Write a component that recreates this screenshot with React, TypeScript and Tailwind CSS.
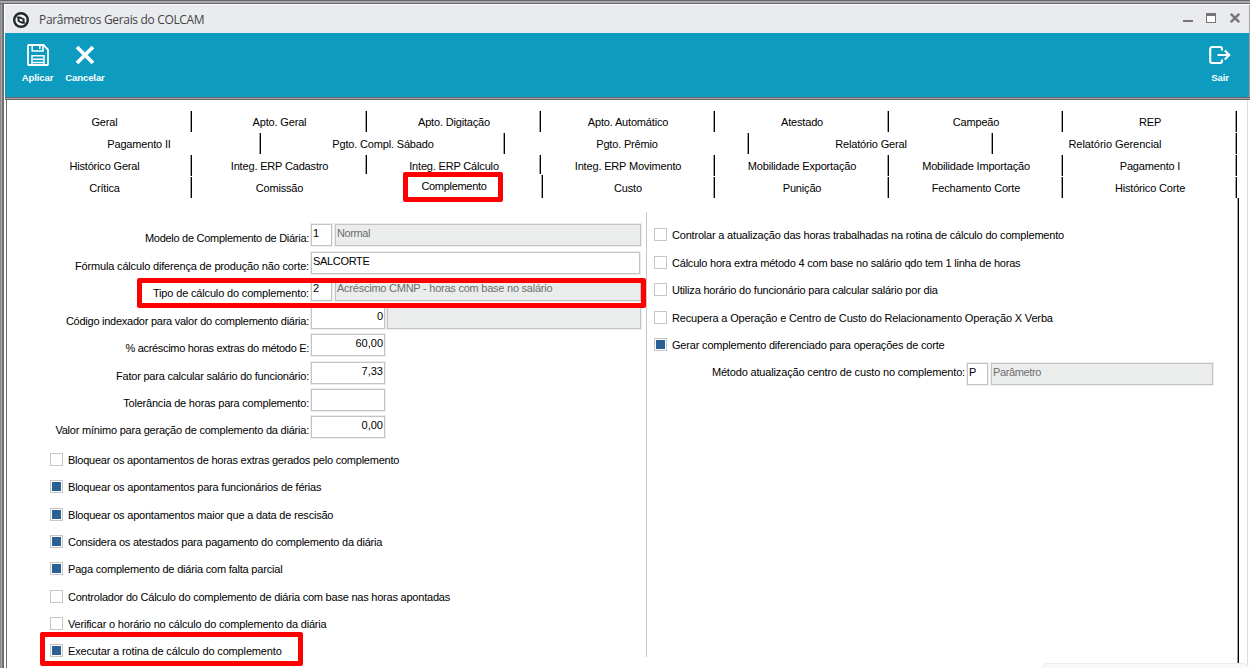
import React from 'react';
import { clsx } from 'clsx';

type Tab = { label: string; width: string; tracking?: string };

const tabRows: Tab[][] = [
  [
    { label: 'Geral', width: 'w-[175px]' },
    { label: 'Apto. Geral', width: 'w-[175px]' },
    { label: 'Apto. Digitação', width: 'w-[174px]' },
    { label: 'Apto. Automático', width: 'w-[174px]' },
    { label: 'Atestado', width: 'w-[174px]' },
    { label: 'Campeão', width: 'w-[174px]' },
    { label: 'REP', width: 'w-[174px]' },
  ],
  [
    { label: 'Pagamento II', width: 'w-[244px]' },
    { label: 'Pgto. Compl. Sábado', width: 'w-[244px]' },
    { label: 'Pgto. Prêmio', width: 'w-[244px]' },
    { label: 'Relatório Geral', width: 'w-[244px]' },
    { label: 'Relatório Gerencial', width: 'w-[244px]', tracking: 'tracking-[-0.06px]' },
  ],
  [
    { label: 'Histórico Geral', width: 'w-[175px]' },
    { label: 'Integ. ERP Cadastro', width: 'w-[175px]' },
    { label: 'Integ. ERP Cálculo', width: 'w-[174px]' },
    { label: 'Integ. ERP Movimento', width: 'w-[174px]' },
    { label: 'Mobilidade Exportação', width: 'w-[174px]' },
    { label: 'Mobilidade Importação', width: 'w-[174px]' },
    { label: 'Pagamento I', width: 'w-[174px]' },
  ],
  [
    { label: 'Crítica', width: 'w-[175px]' },
    { label: 'Comissão', width: 'w-[175px]' },
    { label: 'Complemento', width: 'w-[174px]', tracking: 'tracking-[-0.3px]' },
    { label: 'Custo', width: 'w-[174px]' },
    { label: 'Punição', width: 'w-[174px]' },
    { label: 'Fechamento Corte', width: 'w-[174px]' },
    { label: 'Histórico Corte', width: 'w-[174px]' },
  ],
];

const leftChecks = [
  { label: 'Bloquear os apontamentos de horas extras gerados pelo complemento', checked: false, height: 'h-[27px]', tracking: 'tracking-[-0.23px]' },
  { label: 'Bloquear os apontamentos para funcionários de férias', checked: true, height: 'h-[28px]', tracking: 'tracking-[-0.21px]' },
  { label: 'Bloquear os apontamentos maior que a data de rescisão', checked: true, height: 'h-[27px]', tracking: 'tracking-[-0.21px]' },
  { label: 'Considera os atestados para pagamento do complemento da diária', checked: true, height: 'h-[27px]', tracking: 'tracking-[-0.23px]' },
  { label: 'Paga complemento de diária com falta parcial', checked: true, height: 'h-[28px]', tracking: 'tracking-[-0.2px]' },
  { label: 'Controlador do Cálculo do complemento de diária com base nas horas apontadas', checked: false, height: 'h-[27px]', tracking: 'tracking-[-0.22px]' },
  { label: 'Verificar o horário no cálculo do complemento da diária', checked: false, height: 'h-[27px]', tracking: 'tracking-[-0.18px]' },
  { label: 'Executar a rotina de cálculo do complemento', checked: true, height: 'h-[13px]', tracking: 'tracking-[-0.15px]', marked: true },
];

const rightChecks = [
  { label: 'Controlar a atualização das horas trabalhadas na rotina de cálculo do complemento', checked: false, height: 'h-[28px]', tracking: 'tracking-[-0.196px]' },
  { label: 'Cálculo hora extra método 4 com base no salário qdo tem 1 linha de horas', checked: false, height: 'h-[27px]', tracking: 'tracking-[-0.215px]' },
  { label: 'Utiliza horário do funcionário para calcular salário por dia', checked: false, height: 'h-[28px]', tracking: 'tracking-[-0.2px]' },
  { label: 'Recupera a Operação e Centro de Custo do Relacionamento Operação X Verba', checked: false, height: 'h-[27px]', tracking: 'tracking-[-0.155px]' },
  { label: 'Gerar complemento diferenciado para operações de corte', checked: true, height: 'h-[25px]', tracking: 'tracking-[-0.185px]' },
];

const Marker: React.FC<{ className: string }> = ({ className }) => (
  <div className={clsx('absolute z-10 border-5 border-[#ff0000] rounded-[2px] pointer-events-none', className)} />
);

const Separator: React.FC<{ className?: string }> = ({ className }) => (
  <div className={clsx('w-[2px] shrink-0 bg-black border-l border-[#a0a0a0]', className)} />
);

const Box: React.FC<{ children?: React.ReactNode; className?: string; disabled?: boolean }> = ({ children, className, disabled }) => (
  <div
    className={clsx(
      'h-[22px] shrink-0 border border-[#c4c4c4] shadow-[0_0_0_1px_#ebecef] px-px pt-px leading-[14px] whitespace-nowrap',
      disabled ? 'bg-[#ebedec] text-[#6d6d6d]' : 'bg-white text-black',
      className
    )}
  >
    {children}
  </div>
);

const Field: React.FC<{ label: string; height: string; tracking: string; marked?: boolean; children: React.ReactNode }> = ({
  label, height, tracking, marked, children,
}) => (
  <div className={clsx('relative flex items-start', height)}>
    <span className={clsx('w-[302px] mr-[2px] pt-[7px] text-right leading-[14px] whitespace-nowrap', tracking)}>{label}</span>
    {children}
    {marked && <Marker className="left-[130px] -top-px w-[509px] h-[30px]" />}
  </div>
);

const Check: React.FC<{ label: string; checked: boolean; height: string; tracking: string; marked?: boolean }> = ({
  label, checked, height, tracking, marked,
}) => (
  <div className={clsx('relative flex items-start gap-[5px]', height)}>
    <span className="w-[13px] h-[13px] shrink-0 border border-[#c6c6c6] bg-white p-px">
      {checked && <span className="block w-[9px] h-[9px] bg-[#2b6096]" />}
    </span>
    <span className={clsx('leading-[14px] whitespace-nowrap', tracking)}>{label}</span>
    {marked && <Marker className="-left-[10px] -top-[12px] w-[263px] h-[34px]" />}
  </div>
);

const TitleBar: React.FC = () => (
  <div className="h-[28px] bg-[#e9ebee] flex items-center pl-[8px] pr-[9px]">
    <svg width="17" height="17" viewBox="0 0 17 17" className="mt-[2px]">
      <circle cx="8" cy="8" r="6.8" fill="#f4f5f6" stroke="#20282c" strokeWidth="2.4" />
      <path d="M3 4.6 L7 4.4 L11.6 6.8 V10 L13 11.6 L9 11.8 L4.6 9.4 V6.4 Z" fill="#20282c" />
      <path d="M6.6 6.6 L9.6 7.6 V9.8 L6.6 8.8 Z" fill="#f4f5f6" />
    </svg>
    <span className="ml-[9px] mt-[2px] font-['Open_Sans',sans-serif] text-[12px] tracking-[-0.33px] text-[#444444] whitespace-nowrap">
      Parâmetros Gerais do COLCAM
    </span>
    <div className="ml-auto flex -mt-[2px] text-[#757575]">
      <svg width="10" height="10" viewBox="0 0 10 10"><path d="M0 7h10v2H0z" fill="currentColor" /></svg>
      <svg width="10" height="10" viewBox="0 0 10 10" className="ml-[13px]">
        <path d="M0 0h10v10H0z" fill="currentColor" />
        <path d="M1 3h8v6H1z" fill="#fff" />
      </svg>
      <svg width="10" height="10" viewBox="0 0 10 10" className="ml-[14px]">
        <path d="M.8 .8 9.2 9.2M9.2 .8 .8 9.2" stroke="currentColor" strokeWidth="2.4" />
      </svg>
    </div>
  </div>
);

const ToolButton: React.FC<{ label: string; className: string; children: React.ReactNode }> = ({ label, className, children }) => (
  <div className={clsx('flex flex-col items-center text-white', className)}>
    <div className="h-[24px] flex items-center">{children}</div>
    <span className="mt-[5px] text-[9.5px] leading-[12px] font-bold tracking-[-0.1px]">{label}</span>
  </div>
);

const Toolbar: React.FC = () => (
  <div className="h-[64px] bg-[#0d9bc0] flex items-start pt-[10px] pl-[13px] pr-[9px]">
    <ToolButton label="Aplicar" className="w-[39px]">
      <svg width="22" height="22" viewBox="0 0 22 22" fill="none" stroke="#fff">
        <path d="M1 1.8 Q1 1 1.8 1 H16.5 L21 5.5 V20.2 Q21 21 20.2 21 H1.8 Q1 21 1 20.2 Z" strokeWidth="1.8" />
        <path d="M5.2 1 V7 H16 V1 M12.8 2 V5" strokeWidth="1.6" />
        <path d="M5 21 V11.8 H17 V21 M6 15.2 H16 M6 18.4 H16" strokeWidth="1.5" />
      </svg>
    </ToolButton>
    <ToolButton label="Cancelar" className="ml-[6px] w-[44px]">
      <svg width="20" height="20" viewBox="0 0 20 20">
        <path d="M2 2 18 18M18 2 2 18" stroke="#fff" strokeWidth="3.8" />
      </svg>
    </ToolButton>
    <ToolButton label="Sair" className="ml-auto w-[40px]">
      <svg width="23" height="20" viewBox="0 0 23 20" fill="none" stroke="#fff" strokeWidth="2.1" className="-ml-[2px]">
        <path d="M14 5.5 V4 Q14 2 12 2 H4.2 Q2.2 2 2.2 4 V16 Q2.2 18 4.2 18 H12 Q14 18 14 16 V14.5" />
        <path d="M9.5 10 H21 M16.8 5.6 21.2 10 16.8 14.4" />
      </svg>
    </ToolButton>
  </div>
);

// The selected tab sits 2px higher than its neighbours and hides the separator before it.
const Tabs: React.FC = () => (
  <div className="pl-[10px] pt-[11px] h-[98px]">
    {tabRows.map((row, i) => (
      <div key={i} className="h-[22px] flex">
        {row.map(({ label, width, tracking }) => {
          const active = label === 'Complemento';
          const short = label === 'Integ. ERP Cadastro' || label === 'Integ. ERP Cálculo';
          return (
            <div key={label} className={clsx('relative flex h-[21px]', width)}>
              <span className={clsx('grow pl-[2px] text-center leading-[22px] whitespace-nowrap', tracking ?? 'tracking-[-0.17px]', active && '-mt-[2px]')}>
                {label}
              </span>
              {active && <Separator className="-mt-[2px] h-[23px] translate-x-[2px]" />}
              {!active && (
                <Separator className={clsx(short ? 'h-[19px]' : 'h-[21px]', label === 'Comissão' && 'invisible')} />
              )}
              {active && <Marker className="left-[36px] -top-[5px] w-[100px] h-[30px]" />}
            </div>
          );
        })}
      </div>
    ))}
  </div>
);

export default function App() {
  return (
    <div className="relative w-[1250px] h-[668px] overflow-hidden bg-[#a2a2a2] font-['Liberation_Sans',Arial,sans-serif] text-[11px] text-black flex flex-col">
      {/* Outer frame, top edge */}
      <div className="h-[4px] shrink-0 border-y border-[#68686c] bg-[#a8a8ab]" />
      <div className="grow min-h-0 flex">
        {/* Outer frame, left edge */}
        <div className="w-[4px] shrink-0 border-l border-[#8c8c8c] bg-[#a6a6a6] flex justify-between">
          <div className="w-px ml-px bg-[#757575]" />
          <div className="w-px bg-[#68686c]" />
        </div>
        <div className="grow min-w-0 flex flex-col border-l border-t border-white">
          <div className="w-[1244px] flex flex-col">
            <TitleBar />
            <Toolbar />
          </div>
          <div className="h-[3px] shrink-0 border-y border-[#68686c] bg-[#a2a2a2]" />
          <div className="grow min-h-0 flex bg-white border-l border-white">
            <div className="w-[1241px] shrink-0 border-l border-[#6b6b6b] flex flex-col">
              <Tabs />
              <div className="grow min-h-0 flex items-start">
                <div className="w-[640px] h-[445px] shrink-0 mt-[14px] border-r border-[#c8c8c8] pt-[12px]">
                  <Field label="Modelo de Complemento de Diária:" height="h-[28px]" tracking="tracking-[-0.28px]">
                    <Box className="w-[21px]">1</Box>
                    <Box disabled className="ml-[3px] w-[306px] tracking-[-0.4px]">Normal</Box>
                  </Field>
                  <Field label="Fórmula cálculo diferença de produção não corte:" height="h-[27px]" tracking="tracking-[-0.17px]">
                    <Box className="w-[329px] tracking-[-0.33px]">SALCORTE</Box>
                  </Field>
                  <Field label="Tipo de cálculo do complemento:" height="h-[28px]" tracking="tracking-[-0.16px]" marked>
                    <Box className="w-[21px]">2</Box>
                    <Box disabled className="ml-[3px] w-[306px] tracking-[-0.24px]">Acréscimo CMNP - horas com base no salário</Box>
                  </Field>
                  <Field label="Código indexador para valor do complemento diária:" height="h-[27px]" tracking="tracking-[-0.25px]">
                    <Box className="w-[74px] text-right">0</Box>
                    <Box disabled className="ml-[2px] w-[254px]" />
                  </Field>
                  <Field label="% acréscimo horas extras do método E:" height="h-[28px]" tracking="tracking-[-0.31px]">
                    <Box className="w-[74px] text-right">60,00</Box>
                  </Field>
                  <Field label="Fator para calcular salário do funcionário:" height="h-[27px]" tracking="tracking-[-0.22px]">
                    <Box className="w-[74px] text-right">7,33</Box>
                  </Field>
                  <Field label="Tolerância de horas para complemento:" height="h-[27px]" tracking="tracking-[-0.2px]">
                    <Box className="w-[74px]" />
                  </Field>
                  <Field label="Valor mínimo para geração de complemento da diária:" height="h-[37px]" tracking="tracking-[-0.215px]">
                    <Box className="w-[74px] text-right">0,00</Box>
                  </Field>
                  <div className="pl-[43px]">
                    {leftChecks.map(c => <Check key={c.label} {...c} />)}
                  </div>
                </div>
                <div className="pl-[7px] pt-[30px] w-[590px] shrink-0">
                  {rightChecks.map(c => <Check key={c.label} {...c} />)}
                  <div className="flex items-start">
                    <span className="w-[311px] mr-[2px] pt-[2px] text-right leading-[14px] tracking-[-0.16px] whitespace-nowrap">
                      Método atualização centro de custo no complemento:
                    </span>
                    <Box className="w-[21px]">P</Box>
                    <Box disabled className="ml-[3px] w-[222px] tracking-[-0.37px]">Parâmetro</Box>
                  </div>
                </div>
                <Separator className="h-[466px]" />
              </div>
            </div>
            <div className="w-px bg-[#dedede]" />
          </div>
        </div>
      </div>
      {/* Top edge of the status popup peeking in from below */}
      <div className="absolute left-[1041px] top-[663px] w-[208px] h-[12px] rounded-[6px] border border-[#ececec] bg-[#f8f8f8]" />
    </div>
  );
}
